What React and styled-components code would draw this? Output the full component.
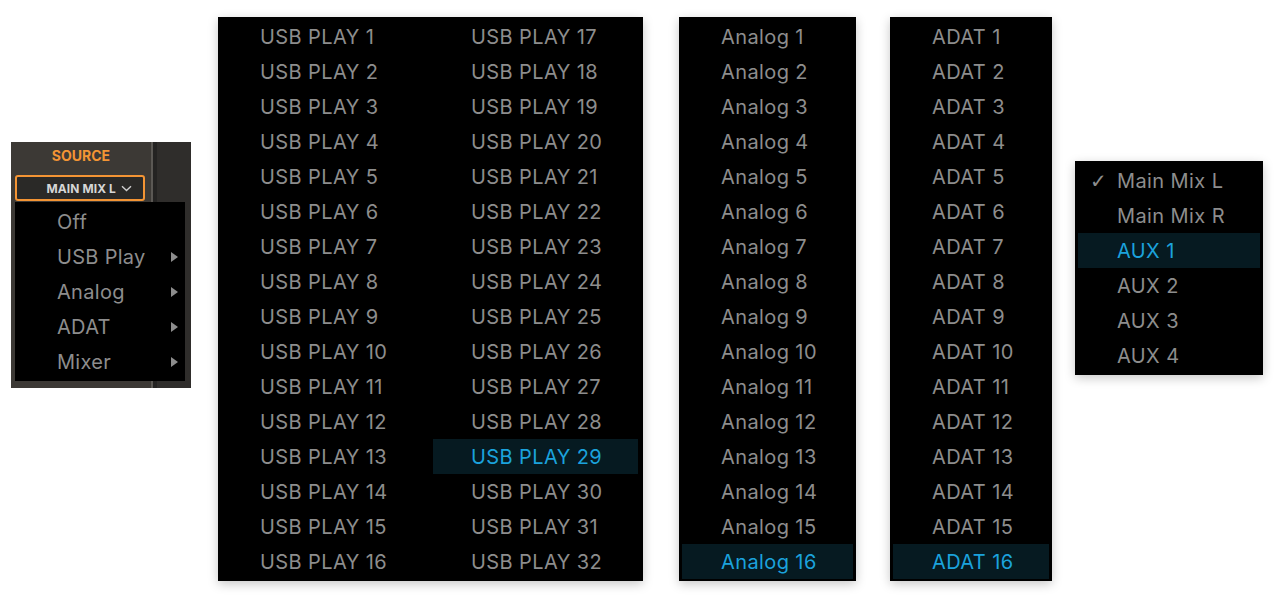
import React from 'react'
import styled, { createGlobalStyle } from 'styled-components'

const usbLeft = Array.from({ length: 16 }, (_, i) => `USB PLAY ${i + 1}`)
const usbRight = Array.from({ length: 16 }, (_, i) => `USB PLAY ${i + 17}`)
const analog = Array.from({ length: 16 }, (_, i) => `Analog ${i + 1}`)
const adat = Array.from({ length: 16 }, (_, i) => `ADAT ${i + 1}`)
const mixes = ['Main Mix L', 'Main Mix R', 'AUX 1', 'AUX 2', 'AUX 3', 'AUX 4']
const sources = [
  { label: 'Off', sub: false },
  { label: 'USB Play', sub: true },
  { label: 'Analog', sub: true },
  { label: 'ADAT', sub: true },
  { label: 'Mixer', sub: true },
]

function App() {
  return (
    <>
      <GlobalStyle />
      <Page>
        <SourcePanel>
          <SourceStrip>
            <SourceLabel>SOURCE</SourceLabel>
            <SelectButton>
              MAIN MIX L
              <svg width="11" height="7" viewBox="0 0 11 7">
                <path d="M1 1.2 L5.5 5.5 L10 1.2" fill="none" stroke="#cfcfcf" strokeWidth="1.4" />
              </svg>
            </SelectButton>
          </SourceStrip>
          <Divider />
          <SourceSide />
          <SourceMenu>
            {sources.map(s => (
              <SourceItem key={s.label}>
                {s.label}
                {s.sub && <SubArrow />}
              </SourceItem>
            ))}
          </SourceMenu>
        </SourcePanel>

        <Menu $offset={27} $top={17}>
          <Columns>
            <Column>
              {usbLeft.map(l => <Item key={l} $pad={37}>{l}</Item>)}
            </Column>
            <Column>
              {usbRight.map(l => <Item key={l} $pad={38} $active={l === 'USB PLAY 29'}>{l}</Item>)}
            </Column>
          </Columns>
        </Menu>

        <Menu $offset={36} $top={17} $width={177}>
          {analog.map(l => <Item key={l} $pad={39} $active={l === 'Analog 16'}>{l}</Item>)}
        </Menu>

        <Menu $offset={34} $top={17} $width={162}>
          {adat.map(l => <Item key={l} $pad={39} $active={l === 'ADAT 16'}>{l}</Item>)}
        </Menu>

        <Menu $offset={23} $top={161} $width={188}>
          {mixes.map((l, i) => (
            <Item key={l} $pad={39} $active={l === 'AUX 1'}>
              {i === 0 && <Check>✓</Check>}
              {l}
            </Item>
          ))}
        </Menu>
      </Page>
    </>
  )
}

export default App

const GlobalStyle = createGlobalStyle`
  body {
    margin: 0;
    background: #ffffff;
    font-family: 'Inter', 'Liberation Sans', sans-serif;
  }
`

const Page = styled.div`
  display: flex;
  align-items: flex-start;
  padding-left: 11px;
  height: 600px;
`

const SourcePanel = styled.div`
  position: relative;
  display: flex;
  margin-top: 142px;
  width: 180px;
  height: 246px;
  background: #2d2b29;
`

const SourceStrip = styled.div`
  display: flex;
  flex-direction: column;
  align-items: flex-start;
  width: 140px;
  background: #3c3935;
`

const SourceLabel = styled.div`
  width: 100%;
  margin-top: 6px;
  text-align: center;
  color: #f39434;
  font-size: 14px;
  font-weight: 700;
  line-height: 16px;
`

const SelectButton = styled.div`
  display: flex;
  align-items: center;
  justify-content: flex-end;
  gap: 5px;
  box-sizing: border-box;
  margin: 11px 0 0 4px;
  width: 130px;
  height: 26px;
  padding-right: 11px;
  border: 2px solid #f39434;
  border-radius: 3px;
  background: #2a2927;
  color: #d6d6d6;
  font-size: 12px;
  font-weight: 700;
  letter-spacing: 0.1px;
`

const Divider = styled.div`
  width: 6px;
  border-left: 2px solid #5b5854;
  box-sizing: border-box;
  background: #242322;
`

const SourceSide = styled.div`
  flex: 1;
  background: #2f2d2b;
`

const SourceMenu = styled.div`
  position: absolute;
  left: 4px;
  top: 60px;
  width: 170px;
  box-sizing: border-box;
  padding: 2px 0;
  background: #000;
`

const SourceItem = styled.div`
  display: flex;
  align-items: center;
  justify-content: space-between;
  height: 35px;
  padding: 0 7px 0 42px;
  color: #8d8d8d;
  font-size: 20px;
  letter-spacing: 0.3px;
`

const SubArrow = styled.span`
  width: 0;
  height: 0;
  border-top: 5px solid transparent;
  border-bottom: 5px solid transparent;
  border-left: 7px solid #8d8d8d;
`

const Menu = styled.div`
  margin-left: ${p => p.$offset}px;
  margin-top: ${p => p.$top}px;
  width: ${p => (p.$width ? `${p.$width}px` : 'auto')};
  box-sizing: border-box;
  padding: 2px 3px;
  background: #000;
  box-shadow: 0 3px 10px rgba(0, 0, 0, 0.22);
`

const Columns = styled.div`
  display: flex;
  gap: 5px;
  padding: 0 2px;
`

const Column = styled.div`
  width: 205px;
`

const Item = styled.div`
  position: relative;
  display: flex;
  align-items: center;
  height: 35px;
  padding-left: ${p => p.$pad}px;
  background: ${p => (p.$active ? '#061a21' : 'transparent')};
  color: ${p => (p.$active ? '#1ba2dc' : '#8d8d8d')};
  font-size: 20px;
  letter-spacing: 0.4px;
  white-space: nowrap;
`

const Check = styled.span`
  position: absolute;
  left: 12px;
  font-family: 'DejaVu Sans', sans-serif;
  font-size: 20px;
  font-style: italic;
  color: #8d8d8d;
`
